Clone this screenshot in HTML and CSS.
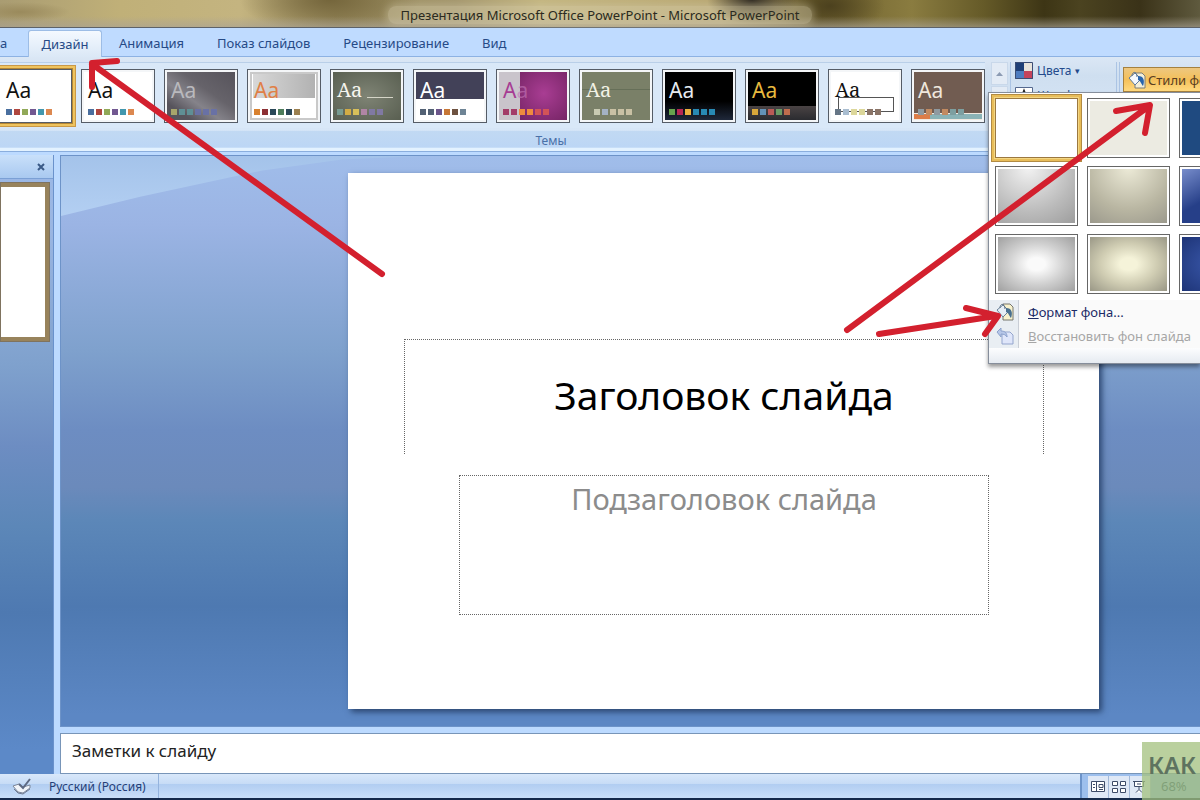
FILE: index.html
```html
<!DOCTYPE html>
<html lang="ru">
<head>
<meta charset="utf-8">
<title>Презентация Microsoft Office PowerPoint - Microsoft PowerPoint</title>
<link rel="stylesheet" href="styles.css">
</head>
<body>
<div class="app">
  <header class="titlebar"><span>Презентация Microsoft Office PowerPoint - Microsoft PowerPoint</span></header>

  <nav class="tabs">
    <button class="tab tab-cut">а</button>
    <button class="tab tab-active">Дизайн</button>
    <button class="tab">Анимация</button>
    <button class="tab">Показ слайдов</button>
    <button class="tab">Рецензирование</button>
    <button class="tab">Вид</button>
  </nav>

  <section class="ribbon">
    <div class="themes">
      <div class="gallery">
        <button class="theme office selected"><span class="aa">Aa</span><span class="chips"><i></i><i></i><i></i><i></i><i></i><i></i></span></button>
        <button class="theme office"><span class="aa">Aa</span><span class="chips"><i></i><i></i><i></i><i></i><i></i><i></i></span></button>
        <button class="theme apex"><span class="aa">Aa</span><span class="chips"><i></i><i></i><i></i><i></i><i></i><i></i></span></button>
        <button class="theme aspect"><span class="aa">Aa</span><span class="chips"><i></i><i></i><i></i><i></i><i></i><i></i></span></button>
        <button class="theme civic"><span class="aa serif">Aa</span><span class="chips"><i></i><i></i><i></i><i></i><i></i><i></i></span></button>
        <button class="theme urban"><span class="aa">Aa</span><span class="chips"><i></i><i></i><i></i><i></i><i></i><i></i></span></button>
        <button class="theme opulent"><span class="aa">A<span class="aa-dim">a</span></span><span class="chips"><i></i><i></i><i></i><i></i><i></i><i></i></span></button>
        <button class="theme equity"><span class="aa serif">Aa</span><span class="chips chips-in"><i></i><i></i><i></i><i></i><i></i></span></button>
        <button class="theme metro"><span class="aa">Aa</span><span class="chips"><i></i><i></i><i></i><i></i><i></i><i></i></span></button>
        <button class="theme module"><span class="aa">Aa</span><span class="chips"><i></i><i></i><i></i><i></i><i></i></span></button>
        <button class="theme origin"><span class="aa serif">Aa</span><span class="chips"><i></i><i></i><i></i><i></i><i></i><i></i></span></button>
        <button class="theme flow"><span class="aa">Aa</span><span class="chips"><i></i><i></i><i></i><i></i><i></i><i></i></span></button>
      </div>
      <div class="scroller"><button aria-label="Вверх"><svg width="7" height="4" viewBox="0 0 7 4"><path fill="#8c9bb3" d="M0 4 3.500 0 7 4z"/></svg></button><button aria-label="Вниз"></button></div>
      <div class="variants">
        <button class="variant">
          <svg width="18" height="17" viewBox="0 0 18 17"><path fill="#1f3f77" d="M0 0h9v9H0z"/><path fill="#e8e4dc" d="M9 0h9v9H9z"/><path fill="#4d7cc0" d="M0 9h9v8H0z"/><path fill="#c4435c" d="M9 9h9v8H9z"/><path fill="none" stroke="#3b4d74" d="M.5.5h17v16H.5z"/></svg>
          Цвета <span class="caret">▾</span>
        </button>
        <button class="variant">
          <svg width="18" height="17" viewBox="0 0 18 17"><path fill="#fff" stroke="#55698f" d="M.5.5h17v16H.5z"/><path fill="none" stroke="#222" stroke-width="2" d="M5 14 9 4l4 10M6 10h6"/></svg>
          Шрифты <span class="caret">▾</span>
        </button>
      </div>
      <div class="styles">
        <button class="style-button">
          <svg width="18" height="18" viewBox="0 0 18 18"><path fill="#f4efd8" stroke="#7d7c76" d="M7 2h7l3 3v12H7z"/><path fill="#f4f8fc" stroke="#5f7c9d" d="m1 7 6-5 6 6-6 6z"/><path fill="none" stroke="#5a7390" d="M4 5c0-5 5-5 5 1"/><path fill="#2864ad" d="M10 5c6 0 7 5 5 10-2-2-2-5-5-6z"/></svg>
          <span>Стили фона</span>
        </button>
      </div>
    </div>
    <div class="group-label">Темы</div>
  </section>

  <main class="workspace">
    <aside class="outline">
      <div class="outline-head"><button aria-label="Закрыть"><svg width="8" height="8" viewBox="0 0 8 8"><path d="m1 1 6 6M7 1 1 7" stroke="#3a5a87" stroke-width="2"/></svg></button></div>
      <div class="mini"></div>
    </aside>
    <div class="center">
      <div class="editor">
        <article class="slide">
          <h1 class="ph-title">Заголовок слайда</h1>
          <p class="ph-sub">Подзаголовок слайда</p>
        </article>
      </div>
      <div class="notes">Заметки к слайду</div>
    </div>
  </main>

  <footer class="status">
    <div class="lang">
      <svg width="20" height="17" viewBox="0 0 20 17"><path fill="#f1f4f9" stroke="#7d8799" d="m1 8 6-2 4 3 7-2v3l-7 5-5-1z"/><path fill="none" stroke="#6f7a90" d="m2 11 4 4 5 1 7-5"/><path fill="none" stroke="#5f6a82" stroke-width="2" d="m7 6 4 4 7-9"/></svg>
      <span>Русский (Россия)</span>
    </div>
    <div class="views">
      <button aria-label="Обычный"><svg width="14" height="12" viewBox="0 0 14 12"><path fill="#fff" stroke="#3d4b68" d="M.5.500h13v10H.5zM5.500.500v10M8 3.500h4v3H8zM8 8.500h4M2 3.500h2M2 6.500h2"/></svg></button>
      <button aria-label="Сортировщик"><svg width="14" height="12" viewBox="0 0 14 12"><path fill="#fff" stroke="#3d4b68" d="M.5.500h5v4h-5zM8.500.500h5v4h-5zM.5 7.500h5v4h-5zM8.500 7.500h5v4h-5z"/></svg></button>
      <button aria-label="Показ слайдов"><svg width="14" height="12" viewBox="0 0 14 12"><path fill="#fff" stroke="#3d4b68" d="M0 .500h12M1.500.500v5h9v-5M6 5.500v3M3 11.500l3-3 3 3M4 3h4"/></svg></button>
    </div>
    <span class="zoom-value">68%</span>
  </footer>

  <div class="menu">
    <div class="swatches">
      <button class="sw white chosen" aria-label="Стиль 1"></button>
      <button class="sw cream" aria-label="Стиль 2"></button>
      <button class="sw navy" aria-label="Стиль 3"></button>
      <button class="sw gray-a" aria-label="Стиль 5"></button>
      <button class="sw tan-a" aria-label="Стиль 6"></button>
      <button class="sw blue-a" aria-label="Стиль 7"></button>
      <button class="sw gray-b" aria-label="Стиль 9"></button>
      <button class="sw tan-b" aria-label="Стиль 10"></button>
      <button class="sw blue-b" aria-label="Стиль 11"></button>
    </div>
    <button class="menu-item">
      <span class="menu-icon"><svg width="18" height="18" viewBox="0 0 18 18"><path fill="#f7f1cc" stroke="#77776f" d="M7 1h7l3 3v13H7z"/><path fill="#e6eef6" stroke="#6b8299" d="m1 7 6-5 6 6-6 6z"/><path fill="none" stroke="#5a6f85" d="M4 5c0-5 5-5 5 1"/><path fill="#49708f" d="M10 5c6 0 7 5 5 10-2-2-2-5-5-6z"/></svg></span>
      <span><u>Ф</u>ормат фона...</span>
    </button>
    <button class="menu-item" disabled>
      <span class="menu-icon"><svg width="18" height="18" viewBox="0 0 18 18"><path fill="#dfe6fa" stroke="#94a5cd" d="M6 5h8l3 3v9H6z"/><path fill="#b7c7e8" stroke="#8ba1cc" d="m1 5 4-4v3c4 0 6 2 6 6-1-2-3-3-6-3v3z"/></svg></span>
      <span><u>В</u>осстановить фон слайда</span>
    </button>
    <div class="menu-foot"></div>
  </div>

  <svg class="arrows" width="1200" height="400" viewBox="0 0 1200 400">
    <path d="M382 274 92 64M117 61 92 63 92 87"/>
    <path d="M847 330 1149 106M1116 111 1150 105 1145 133"/>
    <path d="M879 334 996 316M966 308 998 316 985 334"/>
  </svg>
  <div class="badge">КАК</div>
</div>
</body>
</html>
```
FILE: styles.css
```css
* { box-sizing: border-box; }
body { margin: 0; font-family: "Noto Sans", "Open Sans", sans-serif; font-size: 13px; color: #1e395b; }
button { font: inherit; color: inherit; margin: 0; padding: 0; border: 0; background: none; text-align: left; }
.app { position: relative; display: flex; flex-direction: column; min-height: 100vh; overflow: hidden; background: #bfdbff; }

.titlebar {
  height: 28px; padding-top: 2px; display: flex; align-items: center; justify-content: center; color: #2a2a20;
  border-bottom: 1px solid #5d6268;
  background:
    linear-gradient(#0000 60%, #a9a294a0),
    radial-gradient(ellipse 50px 10px at 20px 12px, #9a8a5c, #0000),
    radial-gradient(ellipse 90px 34px at 330px 0, #75663c, #0000),
    radial-gradient(ellipse 45px 24px at 752px 0, #27221a, #0000),
    radial-gradient(ellipse 55px 30px at 830px 6px, #4c411e, #0000),
    linear-gradient(90deg, #a99c72, #c0b078 10%, #c4b480 20%, #988a5c 28%, #a1946a 38%, #c2b47e 45%, #b7a670 60%, #6d5f2c 68%, #8a7c40 76%, #655a28 82%, #3d3515 87%, #4b4320 90%, #3a3218 95%, #5f5a3e);
}
.titlebar span { padding: 0 12px; border-radius: 8px; background: #d8d0b070; box-shadow: 0 0 8px 2px #d8d0b070; line-height: 18px; }

.tabs { display: flex; height: 29px; padding-top: 2px; background: #bfdbff; border-bottom: 1px solid #8db2e3; color: #264a86; }
.tab { padding: 0 16px 0 17px; }
.tab-cut { padding: 0; width: 28px; }
.tab-active { width: 74px; padding: 0; text-align: center; border: 1px solid #9dbde6; border-bottom: 0; border-radius: 3px 3px 0 0; background: linear-gradient(#f4f9ff, #dbe8f6); margin-bottom: -1px; }

.ribbon { height: 95px; border-bottom: 1px solid #8aaede; background: linear-gradient(#dbe7f5, #cfdff0 20%, #d7e6f7 78%, #c1d9f3 79%, #bcd6f5 96%, #e3f2ff 97%); }
.themes { display: flex; height: 75px; padding-top: 5px; }
.gallery { display: flex; gap: 9px; padding: 6px 0 0; border-top: 1px solid #b9cfe8; height: 66px; background: #d9e8f8; }
.theme { width: 74px; height: 54px; padding: 9px 6px 0; border: 1px solid #555c66; box-shadow: inset 0 0 0 2px #f4f6f8; display: flex; flex-direction: column; justify-content: space-between; color: #111; background: #fff; }
.selected { width: 72px; border-left: 0; box-shadow: inset -2px 0 0 #fff, 0 0 0 1px #b48634, 0 0 0 3px #eec35e, 0 0 0 4px #c99847; }
.aa { font-size: 21px; line-height: 22px; }
.serif { font-family: "Noto Serif", "DejaVu Serif", "Liberation Serif", serif; font-size: 20px; }
.aa-dim { opacity: .6; }
.chips { display: flex; gap: 2px; padding-bottom: 7px; }
.chips i { width: 6px; height: 6px; background: #4a6f9f; }
.chips i:nth-child(2) { background: #b0473f; }
.chips i:nth-child(3) { background: #91a958; }
.chips i:nth-child(4) { background: #725891; }
.chips i:nth-child(5) { background: #4297ae; }
.chips i:nth-child(6) { background: #dc8850; }
.chips-in { padding-left: 8px; }
.apex { color: #b9b9bd; background: linear-gradient(35deg, #57545c 20%, #85838a 40%, #66636a 60%, #55525a); }
.apex i:nth-child(1) { background: #a8a56b; }
.apex i:nth-child(n+2) { background: #5f8f95; }
.apex i:nth-child(n+4) { background: #6971a5; }
.aspect { color: #e07f46; background: linear-gradient(90deg, #d8d8d8, #b2b2b2) 50% 3px / 62px 25px no-repeat, #fff; box-shadow: inset 0 0 0 2px #f4f6f8, inset 0 0 0 4px #c9c9c9; }
.aspect i:nth-child(1) { background: #d8812f; }
.aspect i:nth-child(2) { background: #8d3034; }
.aspect i:nth-child(n+3) { background: #2a4858; }
.aspect i:nth-child(4) { background: #4d7c5a; }
.aspect i:nth-child(6) { background: #9b8050; }
.civic { color: #f5f5ee; background: linear-gradient(#d5d5c8, #d5d5c8) 36px 27px / 26px 1px no-repeat, radial-gradient(#7f8475, #565c4e); }
.civic i:nth-child(1) { background: #789b91; }
.civic i:nth-child(2) { background: #d3ac45; }
.civic i:nth-child(3) { background: #d8c05a; }
.civic i:nth-child(4) { background: #b085a5; }
.civic i:nth-child(n+5) { background: #8079a3; }
.urban { color: #fff; background: linear-gradient(#424158 29px, #fff 29px); }
.urban i:nth-child(-n+2) { background: #536174; }
.urban i:nth-child(3) { background: #6c568b; }
.urban i:nth-child(4) { background: #c77736; }
.urban i:nth-child(5) { background: #6e5240; }
.urban i:nth-child(6) { background: #6e8495; }
.opulent { color: #a63c93; background: linear-gradient(90deg, #c9c4cb 23px, #0000 23px), radial-gradient(circle at 65% 45%, #a93d93, #5a174c); }
.opulent .aa-dim { color: #c477b8; }
.opulent i:nth-child(-n+2) { background: #a33c68; }
.opulent i:nth-child(n+3) { background: #ef8a3e; }
.opulent i:nth-child(n+5) { background: #d25357; }
.equity { color: #f1f1e4; background: linear-gradient(#666f58, #666f58) 0 19px / 100% 1px no-repeat, #7a8068; }
.equity i { background: #c9cbb2; }
.equity i:nth-child(2) { background: #a4b2c5; }
.equity i:nth-child(n+3) { background: #c9c1a4; }
.metro { color: #e6eaf0; background: linear-gradient(#000 60%, #222c40); }
.metro i:nth-child(1) { background: #66a34d; }
.metro i:nth-child(2) { background: #b72753; }
.metro i:nth-child(3) { background: #ebb13e; }
.metro i:nth-child(n+4) { background: #2889b3; }
.module { color: #e8ba3f; background: linear-gradient(#000 36px, #4a4344 36px, #26282d); }
.module i:nth-child(1) { background: #d8a73a; }
.module i:nth-child(2) { background: #6392b6; }
.module i:nth-child(3) { background: #b95a56; }
.module i:nth-child(4) { background: #6a9b66; }
.module i:nth-child(5) { background: #bf6c4d; }
.origin { background: linear-gradient(#fff, #fff) 10px 28px / 54px 13px no-repeat, linear-gradient(#555, #555) 9px 27px / 56px 15px no-repeat, #fff; }
.origin i:nth-child(1) { background: #667686; }
.origin i:nth-child(2) { background: #a9bdd0; }
.origin i:nth-child(n+3) { background: #dcd79a; }
.origin i:nth-child(n+5) { background: #8a7467; }
.flow { color: #efe7dd; background: linear-gradient(90deg, #dc7d48 18px, #8ab3b6 18px) 0 44px / 100% 5px no-repeat, linear-gradient(#715c51 43px, #f0e9df 43px); }
.flow i:nth-child(odd) { background: #8f9aa0; }
.flow i:nth-child(even) { background: #c28a60; }
.flow i:nth-child(n+5) { background: #7d9fa0; }

.scroller { display: flex; flex-direction: column; gap: 1px; width: 17px; margin-left: 6px; }
.scroller button { height: 23px; display: flex; align-items: center; justify-content: center; background: #e3ebf5; border: 1px solid #c9d8ea; }
.variants { width: 107px; margin-left: 2px; padding-left: 4px; border-left: 1px solid #abc4e4; border-right: 1px solid #abc4e4; display: flex; flex-direction: column; gap: 8px; color: #234a8c; }
.variant { display: flex; align-items: center; gap: 4px; height: 17px; white-space: nowrap; font-size: 12px; }
.caret { font-size: 9px; }
.styles { margin-left: 2px; padding: 5px 0 0 3px; border-left: 1px solid #abc4e4; flex: 1; min-width: 0; overflow: hidden; }
.style-button { width: 120px; height: 25px; display: flex; align-items: center; gap: 2px; padding-left: 4px; color: #5a3e22; border: 1px solid #a5813f; background: linear-gradient(#edc780, #f4c05a 50%, #ffd97e); white-space: nowrap; }
.group-label { width: 1102px; text-align: center; line-height: 18px; font-size: 12px; color: #4a70a8; }

.workspace { flex: 1; display: flex; padding-top: 3px; background: #bcdaff; min-height: 0; }
.outline { width: 54px; border-right: 1px solid #6a92cc; background: linear-gradient(#9bb8e6, #9ab6e2 12%, #7fa1cd 34%, #6d8dc2 47%, #5c87b8 60%, #4e79b1 74%, #5c89c8 96%); }
.outline-head { height: 24px; display: flex; align-items: center; justify-content: flex-end; padding-right: 8px; background: linear-gradient(#c9e0fa, #a9c9f0); border-bottom: 1px solid #7ba0d5; }
.outline-head button { display: flex; }
.mini { height: 160px; margin: 3px 3px 0 0; border: 5px solid #98835c; border-left: 0; background: #fff; outline: 1px solid #7f735f; outline-offset: -1px; }
.center { flex: 1; display: flex; flex-direction: column; margin-left: 6px; min-width: 0; }
.editor { position: relative; flex: 1; display: flex; padding: 17px 101px 17px 287px; border: solid #6d93c8; border-width: 1px 0 1px 1px; background: linear-gradient(#a0bdea, #9bb4e4 12%, #7fa1cd 34%, #6d8dc2 48%, #6b8abb 58%, #5c87b8 64%, #4e79b1 79%, #5c87c4 98%); }
.editor::before { content: ""; position: absolute; left: 0; top: 0; width: 360px; height: 60px; background: linear-gradient(#a4c3ea, #b3cff2); clip-path: polygon(0 0, 100% 0, 78% 6%, 56% 24%, 22% 68%, 0 100%); }
.slide { position: relative; flex: 1; min-width: 0; padding: 166px 55px 0 56px; background: #fff; box-shadow: 3px 3px 6px #2b4670; }
.ph-title { margin: 0; height: 115px; border: 1px dotted #666; border-bottom: 0; text-align: center; font-size: 39px; font-weight: 400; line-height: 110px; color: #000; }
.ph-sub { margin: 21px 55px 0; height: 140px; padding-top: 4px; border: 1px dotted #666; text-align: center; font-size: 29px; line-height: 38px; color: #8c8c8c; }
.notes { height: 41px; margin-top: 6px; padding-left: 11px; border: solid #7895b8; border-width: 1px 0 1px 1px; background: #fff; color: #222; font-size: 17px; line-height: 34px; }

.status { height: 26px; display: flex; border-bottom: 2px solid #15294a; background: linear-gradient(#d9e8fa, #c7dcf6 40%, #b1cdf1 42%, #c9def8); }
.lang { width: 159px; margin-right: auto; padding-left: 12px; display: flex; align-items: center; gap: 17px; border-right: 1px solid #94b3dd; color: #253f78; font-size: 12px; }
.views { display: flex; padding: 2px 0 0 6px; border-left: 2px solid #6c93c9; background: #9dbfed; }
.views button { width: 21px; display: flex; align-items: center; justify-content: center; border-right: 1px solid #a3b9d9; background: #dfe8f6; }
.zoom-value { width: 49px; padding-left: 10px; line-height: 24px; background: #8fb3e3; color: #123a66; }

.menu { position: absolute; top: 92px; right: 0; width: 212px; overflow: hidden; border: 1px solid #868e9b; border-right: 0; background: #fafafa; box-shadow: 0 3px 4px #0006; }
.swatches { display: grid; grid-template-columns: repeat(3, 83px); gap: 8px 9px; padding: 5px 0 6px 6px; background: #fff; }
.sw { height: 60px; border: 1px solid #666; box-shadow: inset 0 0 0 2px #fff; }
.white { background: #fff; }
.chosen { border-color: #9b7840; box-shadow: 0 0 0 1px #f3d683, 0 0 0 3px #e8bd5a, 0 0 0 4px #b28b43; }
.cream { background: #ecebe2; }
.navy { background: #1f4a80; }
.gray-a { background: radial-gradient(circle at 40% 0, #f3f3f3, #bbb 60%, #9a9a9a); }
.tan-a { background: radial-gradient(circle at 50% 0, #edebd8, #b9b6a2 60%, #98968a); }
.blue-a { background: linear-gradient(150deg, #7d92d0, #263f88 45%); }
.gray-b { background: radial-gradient(#fafafa 15%, #d0d0d0 50%, #999); }
.tan-b { background: radial-gradient(#f5f3d9 15%, #cfccb2 50%, #929080); }
.blue-b { background: radial-gradient(#3d5cb0, #1c3274); }
.menu-item { display: flex; gap: 9px; width: 100%; height: 24px; align-items: center; color: #1c2b66; white-space: nowrap; }
.menu-item:disabled { color: #a6a6a6; }
.menu-icon { width: 30px; height: 24px; padding: 3px 0 0 7px; background: #e9eef3; border-right: 1px solid #c9ced6; }
.menu-foot { height: 15px; background: linear-gradient(#fcfdfe, #e6ebf1); }

.arrows { position: absolute; left: 0; top: 0; pointer-events: none; fill: none; stroke: #d3202e; stroke-width: 6; stroke-linecap: round; stroke-linejoin: round; }
.badge { position: absolute; right: 0; bottom: 0; width: 58px; height: 58px; padding-left: 6px; overflow: hidden; background: #a3c07ec0; color: #5e7360; font-size: 24px; font-weight: 600; line-height: 46px; }
```
